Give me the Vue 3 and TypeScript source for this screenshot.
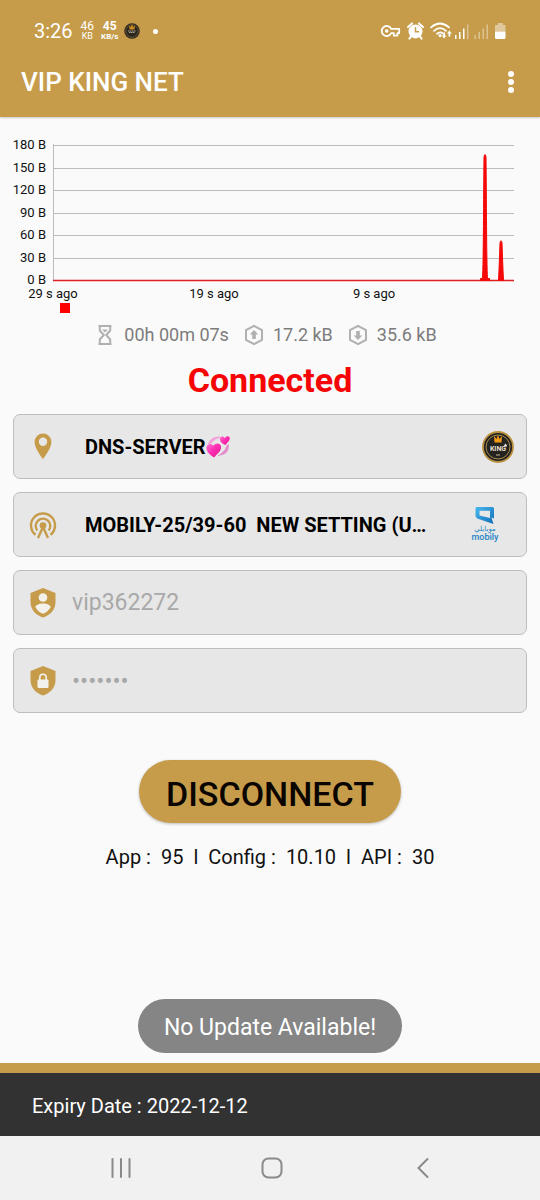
<script setup lang="ts">
import { ref } from 'vue'

interface Tick {
  label: string
  pos: number
}

const yTicks: Tick[] = [180, 150, 120, 90, 60, 30, 0].map((v, i) => ({
  label: `${v} B`,
  pos: Math.round(28 + i * 22.5),
}))

const xTicks: Tick[] = [
  { label: '29 s ago', pos: 53 },
  { label: '19 s ago', pos: 214 },
  { label: '9 s ago', pos: 374 },
]

const username = ref('vip362272')
const password = ref('1234567')

const info = [
  { name: 'App :', value: '95' },
  { name: 'Config :', value: '10.10' },
  { name: 'API :', value: '30' },
]
</script>

<template>
  <div class="app">
    <header class="header">
      <div class="status">
        <div class="status-left">
          <span class="clock">3:26</span>
          <span class="rate"><span class="rate-num">46</span><span class="rate-unit">KB</span></span>
          <span class="rate strong"><span class="rate-num">45</span><span class="rate-unit">KB/s</span></span>
          <svg class="mini-logo" viewBox="0 0 32 32" aria-hidden="true">
            <circle cx="16" cy="16" r="15.5" fill="#2b2620" />
            <circle cx="16" cy="16" r="12.5" fill="none" stroke="#74613a" stroke-width="1.5" />
            <path d="M10 5l3 3 3-5 3 5 3-3-1 8H11z" fill="#c98a1c" />
            <path d="M8 16h16M10 19h12" stroke="#b5ab98" stroke-width="2" stroke-dasharray="3 1" />
          </svg>
          <span class="dot"></span>
        </div>
        <svg class="status-icons" viewBox="0 0 128 22" aria-hidden="true">
          <g fill="none" stroke="#fff" stroke-width="1.8" stroke-linejoin="round">
            <path d="M11.2 8.8A5 5 0 1 0 11.2 13.2H13.8V15.6H17.4V13.2H19.2V8.8Z" />
          </g>
          <circle cx="6.7" cy="11" r="1.8" fill="#fff" />
          <circle cx="35.5" cy="11.4" r="7" fill="#fff" />
          <path d="M28 7l4-3.6M43 7l-4-3.6M31.2 16.2l-1.8 2.4M39.8 16.2l1.8 2.4" stroke="#fff" stroke-width="2" stroke-linecap="round" />
          <path d="M35.5 7.2v4.6h3.6" fill="none" stroke="#c69c4b" stroke-width="1.5" />
          <g fill="none" stroke="#fff" stroke-width="1.8" stroke-linecap="round">
            <path d="M51 7.4Q60 -.4 69 7.4" />
            <path d="M54 10.8Q60 5.4 66 10.8" />
            <path d="M57 13.8Q60 11.4 62.6 13.2" />
          </g>
          <circle cx="60" cy="15.6" r="1.6" fill="#fff" />
          <path d="M63.2 12.5h1.8v3h1.4l-2.3 3-2.3-3h1.4zM68.5 16.5h1.8v-3h1.4l-2.3-3-2.3 3h1.4z" fill="#fff" />
          <g fill="#fff">
            <path d="M75 15h1.500v4h-1.500zM79 12h1.500v7h-1.500zM83 8.500h1.500v10.500h-1.500z" />
            <path opacity=".4" d="M87 4.500h1.500v14.500h-1.500zM94.500 15h1.500v4h-1.500zM98.500 12h1.500v7h-1.500zM102.500 8.500h1.500v10.500h-1.500zM106.500 4.500h1.500v14.500h-1.500z" />
            <path opacity=".45" d="M118 3h5v2h2.500v6.500H115V5h3z" />
            <path d="M115 11.500h10.500v6q0 1.500-1.500 1.500h-7.500q-1.500 0-1.500-1.500z" />
          </g>
        </svg>
      </div>
      <div class="toolbar">
        <h1 class="title">VIP KING NET</h1>
        <button class="more" type="button" aria-label="More options">
          <svg viewBox="0 0 8 24" aria-hidden="true">
            <circle cx="4" cy="4" r="3" /><circle cx="4" cy="12" r="3" /><circle cx="4" cy="20" r="3" />
          </svg>
        </button>
      </div>
    </header>

    <main class="main">
      <svg class="chart" viewBox="0 0 540 200" role="img" aria-label="Traffic over the last 29 seconds">
        <g v-for="t in yTicks" :key="t.label">
          <line x1="53" x2="514" :y1="t.pos + 0.5" :y2="t.pos + 0.5" class="grid-line" />
          <text x="46" :y="t.pos + 4" class="tick tick-y">{{ t.label }}</text>
        </g>
        <line x1="53.500" x2="53.500" y1="27" y2="163" class="grid-line" />
        <text v-for="t in xTicks" :key="t.label" :x="t.pos" y="181" class="tick tick-x">{{ t.label }}</text>
        <path d="M53 163.500H514" stroke="#e02020" stroke-width="1.500" />
        <path
          d="M480.500 163.500V161.500H482.500C483.500 145 483.500 80 484 40Q485 35 486 40C486.500 80 486.500 145 487.500 161.500H489.500V163.500ZM498.500 163.500C499.200 150 499.500 140 500 126Q501 121.500 502 126C502.500 140 502.800 150 503.500 163.500Z"
          fill="#f50808" stroke="#f50808"
        />
        <rect x="60" y="186" width="10" height="10" fill="#f00" />
      </svg>

      <div class="stats">
        <svg viewBox="0 0 20 22" aria-hidden="true">
          <path d="M3.500 2h13M3.500 20h13M4.800 2v4.500l4 4.500-4 4.500V20M15.200 2v4.500l-4 4.500 4 4.500V20" class="stat-line" />
          <path d="M7 5.500h6L10 8.500z" class="stat-fill" />
        </svg>
        <span class="stat">00h 00m 07s</span>
        <svg viewBox="0 0 20 22" aria-hidden="true">
          <path d="M10 1.800l8 4.400v9.600l-8 4.400-8-4.400V6.200z" class="stat-line" />
          <path d="M10 6l4.300 4.500h-2.500V15H8.200v-4.500H5.700z" class="stat-fill" />
        </svg>
        <span class="stat">17.2 kB</span>
        <svg viewBox="0 0 20 22" aria-hidden="true">
          <path d="M10 1.800l8 4.400v9.600l-8 4.400-8-4.400V6.200z" class="stat-line" />
          <path d="M10 16l4.300-4.500h-2.500V7H8.200v4.500H5.700z" class="stat-fill" />
        </svg>
        <span class="stat">35.6 kB</span>
      </div>

      <p class="state">Connected</p>

      <form class="fields" @submit.prevent>
        <button class="field" type="button" aria-haspopup="listbox">
          <svg class="lead" viewBox="0 0 30 30" aria-hidden="true">
            <path fill-rule="evenodd" d="M15 1.500a8.400 8.400 0 0 0-8.400 8.400C6.600 16.500 15 27 15 27S23.400 16.500 23.400 9.900a8.400 8.400 0 0 0-8.400-8.400zm0 4a4.200 4.200 0 1 1 0 8.400 4.200 4.200 0 0 1 0-8.400z" />
          </svg>
          <span class="choice">
            <span class="choice-text">DNS-SERVER</span>
            <svg class="hearts" viewBox="0 0 24 24" role="img" aria-label="Revolving hearts">
              <defs>
                <linearGradient id="heart-fill" x1="0" y1="0" x2="1" y2="1">
                  <stop offset="0" stop-color="#ff7fd0" />
                  <stop offset=".45" stop-color="#ff2fb4" />
                  <stop offset="1" stop-color="#e0168f" />
                </linearGradient>
              </defs>
              <path d="M2 9Q4 2 12 1.500Q14 1.500 15 2.800Q8 4 5.500 8.500Z" fill="#f4a3da" />
              <path d="M22.800 9Q24 16.500 17.500 19.500Q14 21 11.500 20.500Q19 17 20.500 10.500Z" fill="#e58bcb" />
              <path d="M8.200 22.500C4 20 0 16.500.5 12.200C.9 8.600 5.200 7.800 7.500 10.800C9.200 7.800 14.200 7.600 15 11.400C15.800 15.800 11 18.500 8.200 22.500Z" fill="url(#heart-fill)" />
              <path d="M19.500 10C16 8.600 13.200 6 14 3.200C14.800.8 17.800 1 18.800 3.200C20.200.4 23.800.6 23.800 3.400C23.800 6 21 7.500 19.500 10Z" fill="url(#heart-fill)" />
            </svg>
          </span>
          <svg class="king" viewBox="0 0 32 32" role="img" aria-label="King">
            <circle cx="16" cy="16" r="15" fill="#25231f" stroke="#b8903f" stroke-width="1.800" />
            <circle cx="16" cy="16" r="12" fill="none" stroke="#a88c50" stroke-width="1" />
            <path d="M12 5l2.500 3L16 4l1.500 4L20 5l-.5 6.500h-7z" fill="#f39a12" />
            <text x="16" y="20" class="king-text">KING</text>
            <path d="M23.500 12.500l.6 1.200 1.300.1-1 .9.300 1.300-1.200-.7-1.200.7.300-1.300-1-.9 1.300-.1z" fill="#fff" />
            <path d="M14 24h4" stroke="#8f8570" stroke-width="1.500" />
          </svg>
        </button>

        <button class="field" type="button" aria-haspopup="listbox">
          <svg class="lead" viewBox="0 0 30 30" aria-hidden="true">
            <g fill="none" stroke="#c69c4b" stroke-width="2.400">
              <path d="M7.500 24.800A12 12 0 1 1 22.500 24.800" />
              <path d="M9.300 20.500A7.300 7.300 0 1 1 20.700 20.500" />
              <path d="M10 28L15 17L20 28" />
            </g>
            <circle cx="15" cy="15.500" r="3.300" />
          </svg>
          <span class="choice"><span class="choice-text">MOBILY-25/39-60&nbsp; NEW SETTING (U…</span></span>
          <svg class="mobily" viewBox="0 0 28 36" role="img" aria-label="Mobily">
            <defs>
              <linearGradient id="mobily-fill" x1="0" y1="0" x2="1" y2="1">
                <stop offset="0" stop-color="#4ab9ee" />
                <stop offset="1" stop-color="#0f6db8" />
              </linearGradient>
            </defs>
            <path fill-rule="evenodd" d="M5.500 0H21.500Q23 0 23 1.500V11.500L20.500 10.500 22.500 17 7.500 12Q4.500 11 4.500 8V1.500Q4.500 0 5.500 0ZM8.500 3.800V8.500L19 11V3.800Z" fill="url(#mobily-fill)" />
            <text x="14" y="24" class="mobily-ar">موبايلي</text>
            <text x="14" y="33" class="mobily-en">mobily</text>
          </svg>
        </button>

        <label class="field">
          <svg class="lead" viewBox="0 0 30 30" aria-hidden="true">
            <path d="M15 0l12.500 5v9c0 7.500-5 13-12.500 15.500C7.500 27 2.500 21.500 2.500 14V5z" />
            <circle cx="15" cy="9.500" r="4.300" fill="#f3f1ec" />
            <path d="M7.300 19C8.500 14.200 21.500 14.200 22.700 19Q20 24 15 25.800Q10 24 7.300 19Z" fill="#f3f1ec" />
          </svg>
          <input v-model="username" class="entry" type="text" aria-label="Username" />
        </label>

        <label class="field">
          <svg class="lead" viewBox="0 0 30 30" aria-hidden="true">
            <path d="M15 0l12.500 5v9c0 7.500-5 13-12.500 15.500C7.500 27 2.500 21.500 2.500 14V5z" />
            <rect x="9.500" y="13.500" width="11" height="8.500" rx="1" fill="#f3f1ec" />
            <path d="M11.800 14v-2.500a3.200 3.200 0 0 1 6.400 0V14" fill="none" stroke="#f3f1ec" stroke-width="1.600" />
          </svg>
          <input v-model="password" class="entry secret" type="password" aria-label="Password" />
        </label>
      </form>

      <button class="disconnect" type="button">DISCONNECT</button>

      <div class="info">
        <template v-for="(item, i) in info" :key="item.name">
          <span v-if="i > 0">l</span>
          <span>{{ item.name }}</span>
          <span>{{ item.value }}</span>
        </template>
      </div>

      <div class="toast" role="status">No Update Available!</div>
    </main>

    <footer class="expiry">Expiry Date : 2022-12-12</footer>

    <nav class="nav" aria-label="System navigation">
      <button type="button" aria-label="Recent apps">
        <svg viewBox="0 0 24 24"><path d="M3.500 3v18M12 3v18M20.500 3v18" /></svg>
      </button>
      <button type="button" aria-label="Home">
        <svg viewBox="0 0 24 24"><rect x="2.500" y="2.500" width="19" height="19" rx="6" /></svg>
      </button>
      <button type="button" aria-label="Back">
        <svg viewBox="0 0 24 24"><path d="M16.500 3L7.500 12l9 9" /></svg>
      </button>
    </nav>
  </div>
</template>

<style>
body {
  margin: 0;
  background: #fafafa;
}
</style>

<style scoped>
.app {
  display: flex;
  flex-direction: column;
  min-height: 100vh;
  background: #fafafa;
  color: #111;
  font-family: Roboto, "Noto Sans", sans-serif;
}
button,
input {
  font-family: inherit;
  margin: 0;
}
.header {
  background: #c69c4b;
  color: #fff;
  box-shadow: 0 1px 2px rgba(0, 0, 0, 0.2);
}
.status {
  display: flex;
  align-items: center;
  justify-content: space-between;
  height: 48px;
  padding: 14px 32px 0 34px;
  box-sizing: border-box;
}
.status-left {
  display: flex;
  align-items: center;
}
.clock {
  font-size: 20px;
  line-height: 24px;
  margin-right: 8px;
}
.rate {
  display: flex;
  flex-direction: column;
  align-items: center;
  margin-right: 7px;
}
.rate-num {
  font-size: 12px;
  line-height: 11px;
}
.rate-unit {
  font-size: 9px;
  line-height: 9px;
}
.strong {
  font-weight: 700;
  margin-right: 6px;
}
.strong .rate-unit {
  font-size: 8px;
}
.mini-logo {
  width: 16px;
  height: 16px;
}
.dot {
  width: 5px;
  height: 5px;
  margin-left: 13px;
  border-radius: 50%;
  background: #fff;
}
.status-icons {
  width: 128px;
  height: 22px;
}
.toolbar {
  display: flex;
  align-items: center;
  justify-content: space-between;
  height: 69px;
  padding: 0 22px 2px 21px;
  box-sizing: border-box;
}
.title {
  margin: 0;
  font-size: 26px;
  line-height: 32px;
  font-weight: 500;
}
.more {
  display: flex;
  padding: 0;
  border: 0;
  background: none;
}
.more svg {
  width: 14px;
  height: 24px;
  fill: #fff;
}
.main {
  position: relative;
  flex: 1;
  display: flex;
  flex-direction: column;
  align-items: center;
}
.chart {
  display: block;
  width: 100%;
}
.grid-line {
  stroke: #bdbdbd;
}
.tick {
  font-size: 13px;
  fill: #111;
}
.tick-y {
  text-anchor: end;
}
.tick-x {
  text-anchor: middle;
}
.stats {
  display: flex;
  align-items: center;
  gap: 9px;
  margin-top: 6px;
  padding-right: 8px;
  font-size: 18px;
  line-height: 24px;
  color: #7c7c7c;
}
.stats svg {
  width: 20px;
  height: 22px;
}
.stat + svg {
  margin-left: 6px;
}
.stat-line {
  fill: none;
  stroke: #b0b0b0;
  stroke-width: 2;
}
.stat-fill {
  fill: #b0b0b0;
}
.state {
  margin: 13px 0 14px;
  font-size: 34px;
  line-height: 40px;
  font-weight: 700;
  color: #f50505;
}
.fields {
  display: flex;
  flex-direction: column;
  gap: 13px;
  width: 100%;
  padding: 0 13px;
  box-sizing: border-box;
}
.field {
  display: flex;
  align-items: center;
  height: 65px;
  padding: 0 14px;
  box-sizing: border-box;
  border: 1px solid #bebebe;
  border-radius: 7px;
  background: #e7e7e7;
  color: #000;
  text-align: left;
}
.lead {
  flex: none;
  width: 30px;
  height: 30px;
  fill: #c69c4b;
}
.choice {
  flex: 1;
  min-width: 0;
  display: flex;
  align-items: center;
  margin: 0 27px;
  font-size: 20px;
  line-height: 28px;
  font-weight: 700;
}
.choice-text {
  overflow: hidden;
  text-overflow: ellipsis;
  white-space: nowrap;
}
.hearts {
  flex: none;
  width: 24px;
  height: 24px;
}
.king {
  flex: none;
  width: 32px;
  height: 32px;
  margin-right: -2px;
}
.king-text {
  font-size: 7px;
  font-weight: 700;
  fill: #e8dfca;
  text-anchor: middle;
}
.mobily {
  flex: none;
  width: 28px;
  height: 36px;
  margin-right: 13px;
}
.mobily-ar,
.mobily-en {
  fill: #2483c5;
  text-anchor: middle;
}
.mobily-ar {
  font-family: "DejaVu Sans", sans-serif;
  font-size: 7px;
}
.mobily-en {
  font-size: 9px;
  font-weight: 500;
}
.entry {
  flex: 1;
  min-width: 0;
  margin-left: 14px;
  padding: 0;
  border: 0;
  outline: 0;
  background: none;
  font-size: 23px;
  line-height: 30px;
  color: #a9a9a9;
}
.secret {
  font-size: 24px;
}
.disconnect {
  margin-top: 47px;
  height: 63px;
  padding: 4px 27px 0;
  border: 0;
  border-radius: 32px;
  background: #c69c4b;
  box-shadow: 0 1px 3px rgba(0, 0, 0, 0.25);
  color: #0a0500;
  font-size: 34px;
  line-height: 40px;
  font-weight: 500;
}
.info {
  display: flex;
  gap: 10px;
  margin: 22px 0 90px;
  font-size: 20px;
  line-height: 24px;
}
.toast {
  position: absolute;
  bottom: 10px;
  padding: 14px 26px 10px;
  border-radius: 27px;
  background: #858585;
  color: #fff;
  font-size: 23px;
  line-height: 30px;
  white-space: nowrap;
}
.expiry {
  padding: 21px 32px 18px;
  border-top: 10px solid #c69c4b;
  background: #323232;
  color: #fff;
  font-size: 20px;
  line-height: 24px;
}
.nav {
  display: flex;
  align-items: center;
  justify-content: space-around;
  height: 64px;
  padding: 0 42px 0 46px;
  background: #f1f1f1;
}
.nav button {
  display: flex;
  padding: 8px;
  border: 0;
  background: none;
}
.nav svg {
  width: 24px;
  height: 24px;
  fill: none;
  stroke: #8a8a8a;
  stroke-width: 2;
  stroke-linecap: round;
}
</style>
